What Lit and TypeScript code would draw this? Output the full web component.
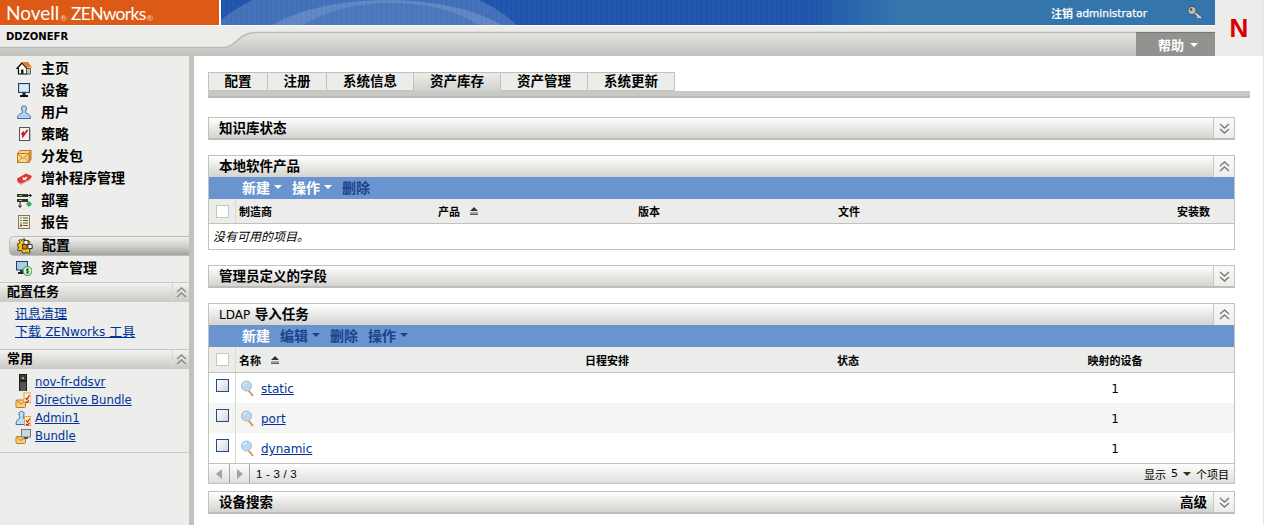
import { LitElement, html, css, svg } from "lit";
import { customElement } from "lit/decorators.js";

const i = (body: unknown, w = 16, h = 16) =>
  html`<svg width=${w} height=${h} viewBox="0 0 ${w} ${h}" class="ic">${body}</svg>`;

const icons: Record<string, unknown> = {
  home: svg`<path d="M1 8.500 6 3 11 8.500V14H2.500V8.500Z" fill="#fff" stroke="#000" stroke-width="1.200"/><path d="M5 2H12L16 7.500H10.500Z" fill="#e8782a"/><path d="M10.500 8.500H14.500V14H10.500Z" fill="#c8c4b8" stroke="#333" stroke-width=".7"/><path d="M5 9.500H7.500V14H5Z" fill="#222"/>`,
  monitor: svg`<rect x="2.500" y="1.500" width="11" height="9" fill="#b9d6ee" stroke="#27415f"/><rect x="4" y="3" width="8" height="6" fill="#d8ebf8"/><rect x="6.500" y="11" width="3" height="2" fill="#222"/><rect x="4" y="13" width="8" height="2" fill="#111"/>`,
  user: svg`<path d="M5.500 3.500C5.500 1.500 10.500 1.500 10.500 3.500 10.500 6 9.500 7 9.500 8.500 11 9.500 14.500 10 14.500 14.500H1.500C1.500 10 5 9.500 6.500 8.500 6.500 7 5.500 6 5.500 3.500Z" fill="#b5d2ea" stroke="#3c6ea6"/>`,
  policy: svg`<rect x="3.500" y="1.500" width="10" height="13" fill="#f4f4f4" stroke="#555"/><rect x="14" y="3" width="1" height="12" fill="#bbb"/><path d="M5.500 8.500 7 7V10L11.500 4" fill="none" stroke="#d01818" stroke-width="1.800"/>`,
  box: svg`<path d="M1.500 5.500 4 2.500H15L13 5.500Z" fill="#f7d38c" stroke="#c47a1e"/><path d="M13 5.500 15 2.500V11.500L13 14.500Z" fill="#e09a3a" stroke="#c47a1e"/><rect x="1.500" y="5.500" width="11.500" height="9" fill="#fbd68e" stroke="#c47a1e"/><path d="M2 6 7 10.500 12.500 6M2 14 6 9.500M12.500 14 8.500 9.500" fill="none" stroke="#c98a2f"/>`,
  patch: svg`<path d="M1 8.500 10 3.500 16 6 14 9.500 5 14 1.500 12Z" fill="#e03636"/><path d="M2 12 5 13.500 14 9 14.500 10 5 15 2 13Z" fill="#e6a6a6"/><path d="M6.500 7 8.500 8 10 6.500 11.500 8 9.500 9 10 10.500 8 9.800 6.500 10.500 7 9Z" fill="#fff"/>`,
  deploy: svg`<rect x="1" y="2" width="11" height="3" fill="#333"/><rect x="1" y="7" width="11" height="3" fill="#333"/><rect x="3" y="3" width="3" height="1" fill="#7ed04a"/><rect x="3" y="8" width="3" height="1" fill="#7ed04a"/><path d="M12 3.500h3M13.500 2l2 1.500-2 1.500M4 10v5M2.500 13.500 4 15.500 5.500 13.500" fill="none" stroke="#111"/><path d="M13 9.500 15.500 12 13 14.500 10.500 12Z" fill="#22b84a" stroke="#0f7a2c" stroke-width=".6"/>`,
  report: svg`<rect x="2.500" y="1.500" width="11" height="13" fill="#f4efd0" stroke="#7b7b5a"/><path d="M7 4h5M7 6.500h5M7 9h5M7 11.500h5" stroke="#555"/><path d="M4 4h2M4 6.500h2M4 9h2" stroke="#777"/><rect x="4" y="10.500" width="2" height="2" fill="#d02020"/>`,
  config: svg`<path d="M6 1h2l.5 2 2 .8L12 3l1 1.500-1 1.500.5 2H15v2.500l-2 .5-.8 2 1 1.500-1.700 1-1.500-1-2 .5L7.500 15H5.500L5 13l-2-.8-1.500 1L.500 11.500l1-1.500L1 8H0V6h2l.8-2-1-1.500L3.500 1.500 5 2.500Z" fill="#e9c41e" stroke="#3a3000" stroke-width=".9"/><rect x="7" y="2.500" width="4" height="4" fill="#fff" stroke="#222" stroke-width=".8"/><rect x="11" y="6.500" width="4" height="4" fill="#fff" stroke="#222" stroke-width=".8"/><rect x="5.500" y="6.500" width="4.500" height="4.500" fill="#e8781e" stroke="#222" stroke-width=".8"/>`,
  asset: svg`<rect x=".5" y="1.500" width="11" height="8.500" fill="#a9cbe8" stroke="#27415f"/><rect x="4" y="10" width="4" height="2" fill="#333"/><rect x="2" y="12" width="6" height="2" fill="#222"/><circle cx="11.500" cy="11" r="4.500" fill="#d8f0d0" stroke="#3c8a3c"/><path d="M13 9.200h-2.500v1.800h2v1.800H10M11.500 8v6" fill="none" stroke="#1d6e2c" stroke-width=".9"/>`,
  server: svg`<rect x="4" y="0" width="8" height="17" fill="#1d1d1d"/><rect x="5" y="1" width="6" height="5" fill="#3c3c3c"/><rect x="7" y="3" width="2" height="2" fill="#44dd44"/><path d="M6 8v9M8 8v9M10 8v9" stroke="#aaa" stroke-width=".8"/>`,
  bundleCheck: svg`<rect x="1" y="8" width="9.500" height="7.500" rx="1" fill="#f7cc80" stroke="#c47a1e"/><path d="M1.500 8.500 6 12l4.500-3.500" fill="none" stroke="#c47a1e"/><rect x="9" y="1" width="7" height="9.500" fill="#fdf2c8" stroke="#d8a848"/><path d="M10.500 6 12 7.500 14.500 3M10.500 9.500 12 10.500 14 8" fill="none" stroke="#d01818" stroke-width="1.200"/>`,
  adminCheck: svg`<path d="M4 3.500C4 .8 9 .8 9 3.500 9 6 8 7 8 8 9 9 11 9.500 11.500 14.500H1C1 10 3.500 9 5 8 5 7 4 6 4 3.500Z" fill="#c4dcf0" stroke="#3c6ea6"/><rect x="9.500" y="6.500" width="6.500" height="9" fill="#fdf2c8" stroke="#d8a848"/><path d="M11 10.500 12.500 12 15 8.500M11 14 12.500 15 14.500 13" fill="none" stroke="#d01818" stroke-width="1.200"/>`,
  bundlePc: svg`<rect x="1" y="8.500" width="9.500" height="7" rx="1" fill="#f7cc80" stroke="#c47a1e"/><path d="M1.500 9 6 12.500l4.500-3.500" fill="none" stroke="#c47a1e"/><rect x="6.500" y="1.500" width="9" height="7.500" fill="#c4d8e8" stroke="#777"/><rect x="9" y="9" width="4" height="2" fill="#555"/>`,
};

const chev = (up: boolean, c = "#7a7b76") =>
  html`<svg width="11" height="11" viewBox="0 0 11 11" class="ic">
    ${up
      ? svg`<path d="M1 5 5.500 1 10 5M1 10 5.500 6 10 10" fill="none" stroke=${c} stroke-width="1.400"/>`
      : svg`<path d="M1 1 5.500 5 10 1M1 6 5.500 10 10 6" fill="none" stroke=${c} stroke-width="1.400"/>`}
  </svg>`;

const tri = (c: string) =>
  html`<svg class="tri" width="8" height="4" viewBox="0 0 8 4"><path d="M0 0H8L4 4Z" fill=${c} /></svg>`;

const sortUp = html`<svg class="sort" width="8" height="8" viewBox="0 0 8 8"><path d="M0 4 4 0 8 4Z" fill="#333"/><path d="M0 6H8M0 7.500H8" stroke="#333" stroke-width=".8"/></svg>`;

const magnifier = html`<svg width="13" height="17" viewBox="0 0 13 17" class="ic"><path d="M7.500 10.500 12 16" stroke="#d88a2a" stroke-width="1.600"/><circle cx="5.500" cy="6" r="5" fill="#bcd8ee" stroke="#9cbcd8"/><path d="M2.500 5C3 3.500 4 3 5.500 2.800" stroke="#fff" fill="none"/></svg>`;

const nav = [
  ["home", "主页"], ["monitor", "设备"], ["user", "用户"], ["policy", "策略"], ["box", "分发包"],
  ["patch", "增补程序管理"], ["deploy", "部署"], ["report", "报告"], ["config", "配置"], ["asset", "资产管理"],
];
const tabs: [string, number][] = [["配置", 60], ["注册", 59], ["系统信息", 87], ["资产库存", 87], ["资产管理", 87], ["系统更新", 87]];
const recents = [["server", "nov-fr-ddsvr"], ["bundleCheck", "Directive Bundle"], ["adminCheck", "Admin1"], ["bundlePc", "Bundle"]];

@customElement("app-root")
export class AppRoot extends LitElement {
  static styles = css`
    :host { display: block; width: 1265px; height: 525px; overflow: hidden; background: #fff;
      font-family: "DejaVu Sans", "Noto Sans CJK SC", sans-serif; font-size: 12px; color: #000; }
    .page { width: 1264px; height: 525px; border-right: 1px solid #e6e6e6; box-sizing: border-box; }
    .ic { display: block; flex: none; }
    a { color: #003399; text-decoration: underline; }

    .top { display: flex; height: 56px; }
    .top-main { width: 1215px; display: flex; flex-direction: column; flex: none; }
    .banner { height: 25px; display: flex; }
    .brand { width: 219px; background: #dc5a16; color: #fff; font-family: Lato, "Liberation Sans", sans-serif;
      font-size: 19px; line-height: 25px; padding-left: 6px; box-sizing: border-box; white-space: nowrap; }
    .brand sup { font-size: 8px; line-height: 0; vertical-align: -1px; margin: 0 4px 0 1px; opacity: .75; }
    .brand span { font-size: 17.500px; letter-spacing: -.7px; }
    .sky { flex: 1; margin-left: 2px; position: relative; overflow: hidden; display: flex; align-items: center; justify-content: flex-end;
      background: linear-gradient(90deg, #2157ae 0, #2157ae 590px, #3476ac 680px, #3476ac 100%); }
    .sky::after { content: ""; position: absolute; inset: 0; width: 700px;
      background: repeating-linear-gradient(90deg, rgba(0,0,40,.05) 0 1px, transparent 1px 5px);
      -webkit-mask-image: linear-gradient(90deg, #000 80%, transparent); mask-image: linear-gradient(90deg, #000 80%, transparent); }
    .arcs { position: absolute; left: 0; top: 0; }
    .who { position: relative; color: #fff; font-size: 11px; font-weight: 700; margin-right: 12px; display: flex; align-items: center; white-space: nowrap; }
    .who b { font-size: 10.500px; font-weight: 400; -webkit-text-stroke: .25px #fff; margin-left: 3px; }
    .who .ic { margin-left: 40px; }
    .sub { flex: 1; position: relative; border-top: 1px solid #fff; background: #ececea; display: flex; justify-content: space-between; }
    .curve { position: absolute; left: 0; top: 0; }
    .zone { position: relative; font-weight: 700; font-size: 10px; padding: 4px 0 0 6px; line-height: 13px; }
    .help { position: relative; margin-top: 6px; width: 79px; background: #92938e; border-top: 1px solid #777873; box-sizing: border-box;
      color: #fff; font-weight: 700; font-size: 13px; display: flex; align-items: center; padding-left: 22px; gap: 2px; }
    .logo { flex: 1; background: #ececea; text-align: center; color: #d90000; font: 700 26px/1 "Liberation Sans", sans-serif; padding-top: 15px; box-sizing: border-box; }

    .body { display: flex; height: 469px; }
    .side { width: 194px; box-sizing: border-box; border-right: 5px solid #c1c2bd; background: #ededeb; padding-top: 1px; flex: none; }
    .item { height: 22px; display: flex; align-items: center; padding-left: 16px; gap: 9px; font-size: 14px; font-weight: 700; }
    .item span { margin-top: -2px; }
    .item.sel { height: 20px; margin: 3px 0 1px 9px; padding-left: 7px; border: 1px solid #bcbdb8; border-right: 0; box-sizing: border-box;
      border-radius: 5px 0 0 5px; background: linear-gradient(#efefed, #d4d5d1 45%, #a3a49e); }
    .item.sel span { margin-top: -4px; }
    .sec { height: 20px; margin-top: 3px; border-top: 1px solid #c8c9c4; box-sizing: border-box; background: linear-gradient(#f2f2f0, #c9cac6);
      display: flex; align-items: center; justify-content: space-between; padding-left: 7px; font-size: 13px; font-weight: 700; }
    .sec span { margin-top: -4px; }
    .sec.flush { margin-top: 0; }
    .sec .t { width: 16px; height: 100%; border-left: 1px solid #d8d9d5; display: flex; align-items: center; justify-content: center; }
    .links { padding: 3px 0 8px 15px; font-size: 13px; }
    .links a { display: block; width: fit-content; line-height: 18px; height: 18px; }
    .links a span { font-size: 12px; }
    .rec { padding: 4px 0 7px 15px; border-bottom: 1px solid #c8c9c4; font-size: 11.700px; }
    .rec div { display: flex; height: 18px; align-items: center; gap: 4px; }

    .main { flex: 1; padding: 16px 0 0 14px; box-sizing: border-box; }
    .tabs { display: flex; height: 19px; }
    .tab { box-sizing: border-box; border: 1px solid #c1c2bd; border-left-width: 0; background: #ececea; font-size: 13.500px; font-weight: 700; line-height: 17px; text-align: center; }
    .tab:first-child { border-left-width: 1px; }
    .tab.on { background: linear-gradient(#ececea, #d0d1cd); border-bottom: 0; }
    .tabbar { width: 1042px; height: 7px; box-sizing: border-box; background: #c8c9c4; border-bottom: 2px solid #b9bab5; margin-bottom: 19px; }

    .panel { width: 1027px; box-sizing: border-box; margin-bottom: 15px; border: 1px solid #c1c2bd; background: #fff; }
    .panel.tight { margin-bottom: 7px; }
    .ph { height: 21px; display: flex; align-items: center; justify-content: space-between; padding-left: 10px;
      background: linear-gradient(#fff, #e6e6e4 55%, #d3d4d0); font-size: 13.500px; font-weight: 700; }
    .ph > span { margin-top: -4px; }
    .ph.closed > span { margin-top: -2px; }
    .ph.closed { border-bottom: 2px solid #bdbeb9; height: 20px; }
    .panel.closedp { border-bottom: 0; }
    .ph i { font-style: normal; font-weight: 400; font-size: 12px; }
    .ph .r { display: flex; align-items: center; height: 100%; }
    .ph .r em { font-style: normal; margin-right: 6px; margin-top: -2px; }
    .ph .t { width: 20px; height: 100%; border-left: 1px solid #c8c9c4; background: linear-gradient(#fafafa, #ececea); display: flex; align-items: center; justify-content: center; }
    .tb { height: 22px; background: #6a94cf; display: flex; align-items: center; padding-left: 33px; gap: 10px; font-size: 14px; font-weight: 700; color: #fff; }
    .tb .d { color: #1d418c; }
    .tb span { display: flex; align-items: center; margin-top: -2px; }
    .tri { margin-left: 4px; }
    .head, .row { display: grid; align-items: center; }
    .t1 { grid-template-columns: 27px 199px 200px 200px 339px 60px; }
    .t2 { grid-template-columns: 27px 346px 252px 162px 238px; }
    .head { height: 24px; background: #ececea; border-bottom: 1px solid #c1c2bd; font-size: 11px; font-weight: 700; }
    .head.t2 { height: 25px; }
    .head > div:not(.c) { margin-top: -1px; }
    .head.t2 > div:not(.c) { margin-top: 1px; }
    .head > div, .row > div { padding-left: 3px; }
    .head .c, .row .c { padding: 0; height: 100%; border-right: 1px solid #d8d9d5; display: flex; align-items: center; justify-content: center; box-sizing: border-box; }
    .head .ctr, .row .ctr { padding: 0; text-align: center; }
    .sort { margin-left: 10px; }
    .sn { display: flex; align-items: center; }
    .box { width: 13px; height: 13px; box-sizing: border-box; }
    .box.h { background: #fff; border: 1px solid #c6c7b8; }
    .box.r { border: 1px solid #1f4a8c; background: linear-gradient(135deg, #fff, #d6d6d4); }
    .empty { height: 25px; line-height: 27px; padding-left: 4px; font-style: italic; font-size: 12px; box-sizing: border-box; }
    .row { height: 30px; }
    .row.alt { background: #f5f5f3; }
    .row .c { align-items: flex-start; padding-top: 6px; }
    .row .n { display: flex; align-items: center; gap: 7px; padding-left: 5px; }
    .row .n a, .row .ctr { position: relative; top: 1px; }
    .foot { height: 20px; box-sizing: border-box; border-top: 1px solid #c1c2bd; background: linear-gradient(#fdfdfd, #dededc); display: flex; align-items: center; justify-content: space-between; font-size: 11px; }
    .pg { display: flex; align-items: center; height: 100%; }
    .pg .b { width: 20px; height: 100%; display: flex; align-items: center; justify-content: center; border-right: 1px solid #a5a6a1; box-sizing: border-box; }
    .pg .b.l { width: 21px; }
    .pg .cnt { padding-left: 6px; font-family: "Liberation Sans", sans-serif; font-size: 11.500px; letter-spacing: .2px; }
    .show { padding-right: 5px; display: flex; align-items: center; gap: 5px; font-size: 11px; }
    .show .tri { margin: 0; }
  `;

  private panel(title: unknown, open: boolean, body: unknown = null, extra: unknown = null, cls = "") {
    return html`<section class="panel ${cls} ${open ? "" : "closedp"}">
      <div class="ph ${open ? "" : "closed"}"><span>${title}</span>
        <div class="r">${extra ? html`<em>${extra}</em>` : null}<div class="t">${chev(open)}</div></div>
      </div>${body}</section>`;
  }

  private toolbar(items: [string, boolean, boolean][]) {
    return html`<div class="tb">${items.map(([t, dark, menu]) =>
      html`<span class=${dark ? "d" : ""}>${t}${menu ? tri(dark ? "#1d418c" : "#fff") : null}</span>`)}</div>`;
  }

  render() {
    const rows = ["static", "port", "dynamic"];
    return html`<div class="page">
      <header class="top">
        <div class="top-main">
          <div class="banner">
            <div class="brand">Novell<sup>®</sup><span>ZENworks</span><sup>®</sup></div>
            <div class="sky">
              <svg class="arcs" width="400" height="25" viewBox="0 0 400 25">
                <ellipse cx="145" cy="60" rx="166" ry="82" fill="#fff" fill-opacity=".16"/>
                <ellipse cx="166" cy="60" rx="141" ry="60" fill="#fff" fill-opacity=".16"/>
                <ellipse cx="170" cy="60" rx="111" ry="57" fill="#4a78bc" fill-opacity=".85"/>
              </svg>
              <div class="who">注销<b>administrator</b>
                <svg width="16" height="14" viewBox="0 0 16 14" class="ic"><path d="M8 7 14 12" stroke="#2a4a7a" stroke-width="3.500"/><path d="M8 7 14 12M12 10l-1.500 2" stroke="#cfcfcf" stroke-width="2"/><circle cx="5" cy="4.500" r="4.200" fill="#b8b8b8" stroke="#444a58"/><circle cx="4" cy="3.500" r="1.200" fill="#444"/></svg>
              </div>
            </div>
          </div>
          <div class="sub">
            <svg class="curve" width="1215" height="30" viewBox="0 0 1215 30">
              <defs><linearGradient id="g" x1="0" y1="6" x2="0" y2="30" gradientUnits="userSpaceOnUse"><stop offset="0" stop-color="#e6e7e4"/><stop offset="1" stop-color="#c0c1bc"/></linearGradient></defs>
              <path d="M0 21H224C236 21 238 6 256 6H1215V30H0Z" fill="url(#g)" stroke="none"/>
              <path d="M0 21.500H224C236 21.500 238 6.500 256 6.500H1215" fill="none" stroke="#bbbcb7" stroke-width="1.500"/>
            </svg>
            <div class="zone">DDZONEFR</div>
            <div class="help">帮助${tri("#fff")}</div>
          </div>
        </div>
        <div class="logo">N</div>
      </header>
      <div class="body">
        <aside class="side">
          ${nav.map(([ic, t]) => html`<div class="item ${t === "配置" ? "sel" : ""}">${i(icons[ic])}<span>${t}</span></div>`)}
          <div class="sec"><span>配置任务</span><div class="t">${chev(true, "#8a8b86")}</div></div>
          <div class="links"><a>讯息清理</a><a>下载 <span>ZENworks</span> 工具</a></div>
          <div class="sec flush"><span>常用</span><div class="t">${chev(true, "#8a8b86")}</div></div>
          <div class="rec">${recents.map(([ic, t]) => html`<div>${i(icons[ic], 16, 17)}<a>${t}</a></div>`)}</div>
        </aside>
        <main class="main">
          <nav class="tabs">${tabs.map(([t, w]) => html`<div class="tab ${t === "资产库存" ? "on" : ""}" style="width:${w}px">${t}</div>`)}</nav>
          <div class="tabbar"></div>
          ${this.panel("知识库状态", false)}
          ${this.panel("本地软件产品", true, html`
            ${this.toolbar([["新建", false, true], ["操作", false, true], ["删除", true, false]])}
            <div class="head t1"><div class="c"><div class="box h"></div></div><div>制造商</div><div class="sn">产品${sortUp}</div><div>版本</div><div>文件</div><div>安装数</div></div>
            <div class="empty">没有可用的项目。</div>`)}
          ${this.panel("管理员定义的字段", false)}
          ${this.panel(html`<i>LDAP</i> 导入任务`, true, html`
            ${this.toolbar([["新建", false, false], ["编辑", true, true], ["删除", true, false], ["操作", true, true]])}
            <div class="head t2"><div class="c"><div class="box h"></div></div><div class="sn">名称${sortUp}</div><div>日程安排</div><div>状态</div><div class="ctr">映射的设备</div></div>
            ${rows.map((r, n) => html`<div class="row t2 ${n === 1 ? "alt" : ""}"><div class="c"><div class="box r"></div></div><div class="n">${magnifier}<a>${r}</a></div><div></div><div></div><div class="ctr">1</div></div>`)}
            <div class="foot">
              <div class="pg">
                <div class="b l"><svg width="6" height="10" viewBox="0 0 6 10"><path d="M6 0V10L0 5Z" fill="#a3a49f"/></svg></div>
                <div class="b"><svg width="6" height="10" viewBox="0 0 6 10"><path d="M0 0V10L6 5Z" fill="#a3a49f"/></svg></div>
                <div class="cnt">1 - 3 / 3</div>
              </div>
              <div class="show">显示 <span>5</span>${tri("#2c3a10")}<span>个项目</span></div>
            </div>`, null, "tight")}
          ${this.panel("设备搜索", false, null, "高级")}
        </main>
      </div>
    </div>`;
  }
}
